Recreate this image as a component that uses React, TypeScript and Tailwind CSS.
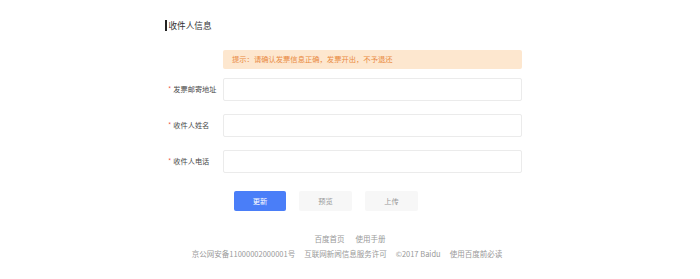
const font = { fontFamily: '"Noto Sans CJK SC", "Noto Sans", sans-serif' };

const Field = ({ label }: { label: string }) => (
  <div className="flex items-center h-[23px]">
    <div className="w-[58px] pl-[3px] flex items-center text-[7.2px] text-[#4a4a4a]">
      <span className="text-[#f05a4a] mr-[2px]">*</span>
      {label}
    </div>
    <div className="w-[299px] h-[23px] border border-[#ebebeb] rounded-[2px] bg-white" />
  </div>
);

export default function App() {
  return (
    <div className="w-[700px] h-[279px] bg-white overflow-hidden" style={font}>
      <div className="pl-[165px] pt-[20px]">
        <div className="flex items-center h-[11px]">
          <div className="w-[1.5px] h-[11px] bg-[#222] mr-[2px]" />
          <span className="text-[8.6px] text-[#333] leading-none">收件人信息</span>
        </div>

        <div className="ml-[58px] mt-[19px] w-[299px] h-[19px] bg-[#fde7cf] rounded-[2px] flex items-center pl-[9px] text-[7.3px] text-[#e98a3f]">
          提示：请确认发票信息正确，发票开出，不予退还
        </div>

        <div className="mt-[9px] flex flex-col gap-[13px]">
          <Field label="发票邮寄地址" />
          <Field label="收件人姓名" />
          <Field label="收件人电话" />
        </div>

        <div className="ml-[69px] mt-[18px] flex gap-[13px] text-[7.3px]">
          <button className="w-[52px] h-[20px] rounded-[2px] bg-[#4a7ef8] text-white">更新</button>
          <button className="w-[53px] h-[20px] rounded-[2px] bg-[#f7f7f7] text-[#999]">预览</button>
          <button className="w-[53px] h-[20px] rounded-[2px] bg-[#f7f7f7] text-[#999]">上传</button>
        </div>
      </div>

      <div className="mt-[22px] flex flex-col items-center text-[7.5px] text-[#999] gap-[4px]">
        <div className="flex gap-[11px]">
          <span>百度首页</span>
          <span>使用手册</span>
        </div>
        <div className="flex gap-[9px] pr-[6px]">
          <span>京公网安备11000002000001号</span>
          <span>互联网新闻信息服务许可</span>
          <span>©2017 Baidu</span>
          <span>使用百度前必读</span>
        </div>
      </div>
    </div>
  );
}
